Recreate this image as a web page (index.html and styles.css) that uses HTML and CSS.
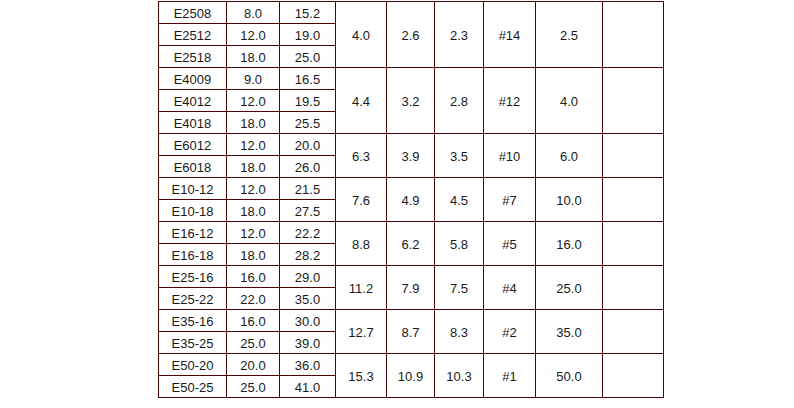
FILE: index.html
```html
<!DOCTYPE html>
<html>
<head>
<meta charset="utf-8">
<link rel="stylesheet" href="styles.css">
</head>
<body>
<div class="wrap">
<table class="spec">
<colgroup>
<col class="c1"><col class="c2"><col class="c3"><col class="c4"><col class="c5"><col class="c6"><col class="c7"><col class="c8"><col class="c9">
</colgroup>
<tbody>
<tr><td>E2508</td><td>8.0</td><td>15.2</td><td rowspan="3">4.0</td><td rowspan="3">2.6</td><td rowspan="3">2.3</td><td rowspan="3">#14</td><td rowspan="3">2.5</td><td rowspan="3"></td></tr>
<tr><td>E2512</td><td>12.0</td><td>19.0</td></tr>
<tr><td>E2518</td><td>18.0</td><td>25.0</td></tr>
<tr><td>E4009</td><td>9.0</td><td>16.5</td><td rowspan="3">4.4</td><td rowspan="3">3.2</td><td rowspan="3">2.8</td><td rowspan="3">#12</td><td rowspan="3">4.0</td><td rowspan="3"></td></tr>
<tr><td>E4012</td><td>12.0</td><td>19.5</td></tr>
<tr><td>E4018</td><td>18.0</td><td>25.5</td></tr>
<tr><td>E6012</td><td>12.0</td><td>20.0</td><td rowspan="2">6.3</td><td rowspan="2">3.9</td><td rowspan="2">3.5</td><td rowspan="2">#10</td><td rowspan="2">6.0</td><td rowspan="2"></td></tr>
<tr><td>E6018</td><td>18.0</td><td>26.0</td></tr>
<tr><td>E10-12</td><td>12.0</td><td>21.5</td><td rowspan="2">7.6</td><td rowspan="2">4.9</td><td rowspan="2">4.5</td><td rowspan="2">#7</td><td rowspan="2">10.0</td><td rowspan="2"></td></tr>
<tr><td>E10-18</td><td>18.0</td><td>27.5</td></tr>
<tr><td>E16-12</td><td>12.0</td><td>22.2</td><td rowspan="2">8.8</td><td rowspan="2">6.2</td><td rowspan="2">5.8</td><td rowspan="2">#5</td><td rowspan="2">16.0</td><td rowspan="2"></td></tr>
<tr><td>E16-18</td><td>18.0</td><td>28.2</td></tr>
<tr><td>E25-16</td><td>16.0</td><td>29.0</td><td rowspan="2">11.2</td><td rowspan="2">7.9</td><td rowspan="2">7.5</td><td rowspan="2">#4</td><td rowspan="2">25.0</td><td rowspan="2"></td></tr>
<tr><td>E25-22</td><td>22.0</td><td>35.0</td></tr>
<tr><td>E35-16</td><td>16.0</td><td>30.0</td><td rowspan="2">12.7</td><td rowspan="2">8.7</td><td rowspan="2">8.3</td><td rowspan="2">#2</td><td rowspan="2">35.0</td><td rowspan="2"></td></tr>
<tr><td>E35-25</td><td>25.0</td><td>39.0</td></tr>
<tr><td>E50-20</td><td>20.0</td><td>36.0</td><td rowspan="2">15.3</td><td rowspan="2">10.9</td><td rowspan="2">10.3</td><td rowspan="2">#1</td><td rowspan="2">50.0</td><td rowspan="2"></td></tr>
<tr><td>E50-25</td><td>25.0</td><td>41.0</td></tr>
</tbody>
</table>
</div>
</body>
</html>
```

FILE: styles.css
```css
html, body {
  margin: 0;
  padding: 0;
  background: #ffffff;
}
.wrap {
  padding: 1px 0 0 158px;
}
.spec {
  border-collapse: collapse;
  table-layout: fixed;
  width: 506px;
  font-family: "Liberation Sans", Arial, sans-serif;
  font-size: 13px;
  color: #1a1a1a;
}
.spec td {
  border: 1px solid #4e0404;
  padding: 2px 0 0 0;
  height: 19px;
  text-align: center;
  vertical-align: middle;
  line-height: 15px;
}
.c1 { width: 68px; }
.c2 { width: 53px; }
.c3 { width: 56px; }
.c4 { width: 51px; }
.c5 { width: 48px; }
.c6 { width: 49px; }
.c7 { width: 52px; }
.c8 { width: 67px; }
.c9 { width: 61px; }
```
